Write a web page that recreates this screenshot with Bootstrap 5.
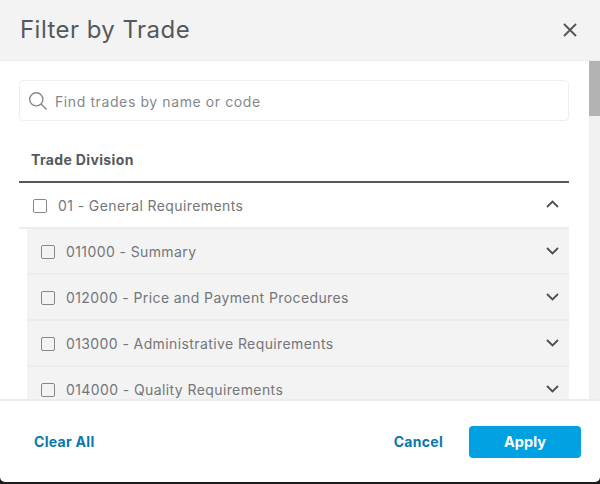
<!DOCTYPE html>
<html lang="en">
<head>
<meta charset="utf-8">
<title>Filter by Trade</title>
<link href="https://cdn.jsdelivr.net/npm/bootstrap@5.3.0/dist/css/bootstrap.min.css" rel="stylesheet">
<style>
html,body{height:484px;overflow:hidden;background:#1c1c1c;}
body{font-family:Inter,"Open Sans",sans-serif;color:#73767a;}
.dlg{width:600px;height:482px;background:#fff;border-radius:0 0 5px 5px;overflow:hidden;display:flex;flex-direction:column;}
.dlg-head{height:61px;flex:none;background:#f3f3f3;border-bottom:1px solid #ececec;padding:0 23px 0 20px;}
.dlg-title{font-size:24px;font-weight:400;color:#55595e;margin:0;letter-spacing:.45px;}
.dlg-mid{height:338px;flex:none;display:flex;overflow:hidden;}
.dlg-scroll{flex:1;padding:19px 20px 0 19px;min-width:0;}
.bar-track{width:11px;flex:none;background:#f1f1f1;}
.bar-thumb{height:55px;background:#b3b3b3;}
.find{height:41px;border:1.5px solid #eeeeee;border-radius:4px;padding:0 8px;gap:7px;}
.find-input{border:0;outline:0;flex:1;min-width:0;font:inherit;font-size:14px;color:#85888b;background:transparent;padding:1px 0 0;letter-spacing:.6px;}
.find-input::placeholder{color:#85888b;opacity:1;}
.col-head{height:62px;border-bottom:2px solid #55595e;padding:0 12px 11px;font-size:14px;font-weight:700;color:#55595e;letter-spacing:.36px;}
.tree-row{height:46px;padding:0 10px 0 14px;border-bottom:2px solid #ececec;font-size:14px;letter-spacing:.4px;gap:11px;}
.tree-row.sub{margin-left:8px;background:#f3f3f3;}
.tick{width:14px;height:14px;flex:none;border:1.6px solid #85888b;border-radius:2px;margin-top:2px;}
.tree-label{flex:1;min-width:0;white-space:nowrap;}
.chev-up{margin-bottom:2px;}
.dlg-foot{flex:1;border-top:2px solid #ececec;padding:0 19px 0 34px;}
.act-link{font-size:14px;font-weight:700;color:#0a78ab;text-decoration:none;letter-spacing:.3px;}
.act-apply{width:112px;height:32px;background:#00a1e0;color:#fff;font-size:14.5px;font-weight:700;border:0;border-radius:4px;padding:0;margin-left:26px;}
.act-apply:hover{background:#00a1e0;color:#fff;}
</style>
</head>
<body>
<div class="dlg">
  <div class="dlg-head d-flex align-items-center justify-content-between">
    <h1 class="dlg-title">Filter by Trade</h1>
    <svg width="14" height="14" viewBox="0 0 14 14" fill="none" stroke="#55595e" stroke-width="2" aria-label="Close"><path d="M1 1l12 12M13 1L1 13"/></svg>
  </div>
  <div class="dlg-mid">
    <div class="dlg-scroll">
      <div class="find d-flex align-items-center">
        <svg width="20" height="20" viewBox="0 0 20 20" fill="none" stroke="#85888b" stroke-width="1.4"><circle cx="8.3" cy="8.3" r="6.6"/><path d="M13 13l5.6 5.6"/></svg>
        <input class="find-input" type="text" placeholder="Find trades by name or code">
      </div>
      <div class="col-head d-flex align-items-end">Trade Division</div>
      <div class="tree-row d-flex align-items-center">
        <span class="tick"></span><span class="tree-label">01 - General Requirements</span>
        <svg class="chev-up" width="13" height="8" viewBox="0 0 13 8" fill="none" stroke="#4b4f54" stroke-width="1.8"><path d="M1 7l5.5-5.5L12 7"/></svg>
      </div>
      <div class="tree-row sub d-flex align-items-center">
        <span class="tick"></span><span class="tree-label">011000 - Summary</span>
        <svg width="13" height="8" viewBox="0 0 13 8" fill="none" stroke="#4b4f54" stroke-width="1.8"><path d="M1 1l5.5 5.5L12 1"/></svg>
      </div>
      <div class="tree-row sub d-flex align-items-center">
        <span class="tick"></span><span class="tree-label">012000 - Price and Payment Procedures</span>
        <svg width="13" height="8" viewBox="0 0 13 8" fill="none" stroke="#4b4f54" stroke-width="1.8"><path d="M1 1l5.5 5.5L12 1"/></svg>
      </div>
      <div class="tree-row sub d-flex align-items-center">
        <span class="tick"></span><span class="tree-label">013000 - Administrative Requirements</span>
        <svg width="13" height="8" viewBox="0 0 13 8" fill="none" stroke="#4b4f54" stroke-width="1.8"><path d="M1 1l5.5 5.5L12 1"/></svg>
      </div>
      <div class="tree-row sub d-flex align-items-center">
        <span class="tick"></span><span class="tree-label">014000 - Quality Requirements</span>
        <svg width="13" height="8" viewBox="0 0 13 8" fill="none" stroke="#4b4f54" stroke-width="1.8"><path d="M1 1l5.5 5.5L12 1"/></svg>
      </div>
    </div>
    <div class="bar-track"><div class="bar-thumb"></div></div>
  </div>
  <div class="dlg-foot d-flex align-items-center">
    <a class="act-link me-auto" href="#">Clear All</a>
    <a class="act-link" href="#">Cancel</a>
    <button class="act-apply btn" type="button">Apply</button>
  </div>
</div>
<script src="https://cdn.jsdelivr.net/npm/bootstrap@5.3.0/dist/js/bootstrap.bundle.min.js"></script>
</body>
</html>
